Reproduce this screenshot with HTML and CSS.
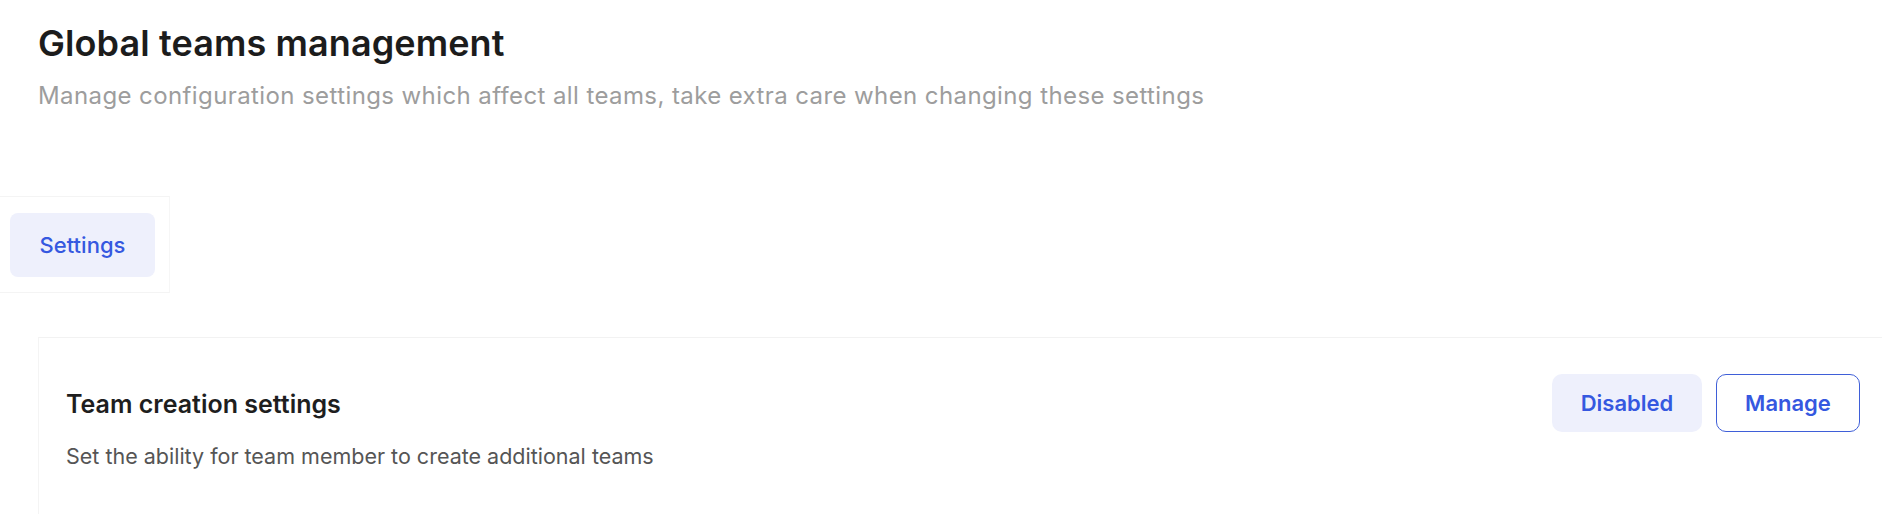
FILE: index.html
```html
<!DOCTYPE html>
<html lang="en">
<head>
  <meta charset="UTF-8" />
  <meta name="viewport" content="width=device-width, initial-scale=1.0"/>
  <title>Global teams management</title>
  <link rel="stylesheet" href="styles.css">
</head>
<body>

  <div class="page">
    <header class="page-header">
      <h1>Global teams management</h1>
      <p>Manage configuration settings which affect all teams, take extra care when changing these settings</p>
    </header>

    <nav class="tabs">
      <button type="button" class="tab active">Settings</button>
    </nav>

    <section class="card">
      <div class="setting-row">
        <div class="setting-info">
          <h3>Team creation settings</h3>
          <p>Set the ability for team member to create additional teams</p>
        </div>
        <div class="setting-actions">
          <button type="button" class="status">Disabled</button>
          <button type="button" class="manage">Manage</button>
        </div>
      </div>
    </section>
  </div>

</body>
</html>
```

FILE: styles.css
```css
* {
  margin: 0;
  padding: 0;
  box-sizing: border-box;
}

body, html {
  height: 100%;
  font-family: Inter, 'Noto Sans', sans-serif;
  background-color: white;
  overflow: hidden;
}

.page {
  display: flex;
  flex-direction: column;
}

.page-header {
  padding: 22px 0 0 38px;
}

.page-header h1 {
  font-size: 36px;
  font-weight: 600;
  line-height: 42px;
  letter-spacing: 0.1px;
  color: #1c1c1c;
}

.page-header p {
  margin-top: 17px;
  font-size: 24px;
  line-height: 30px;
  letter-spacing: 0.4px;
  color: #9d9d9d;
}

.tabs {
  margin-top: 85px;
  width: 170px;
  padding: 16px 15px 15px 10px;
  border-top: 1px solid #f4f4f4;
  border-bottom: 1px solid #f4f4f4;
  border-right: 1px solid #f6f6f6;
}

.tab {
  width: 145px;
  height: 64px;
  border: none;
  border-radius: 8px;
  background-color: #eef0fc;
  color: #3558e0;
  font-family: inherit;
  font-size: 22px;
  font-weight: 500;
  cursor: pointer;
}

.card {
  margin: 44px 0 0 38px;
  border-top: 1px solid #f2f2f2;
  border-left: 1px solid #f4f4f4;
  padding: 36px 22px 60px 27px;
  min-height: 200px;
}

.setting-row {
  display: flex;
  justify-content: space-between;
  align-items: flex-start;
}

.setting-info h3 {
  margin-top: 15px;
  font-size: 25px;
  font-weight: 600;
  color: #1e1e1e;
}

.setting-info p {
  margin-top: 24px;
  font-size: 21.5px;
  color: #555;
}

.setting-actions {
  display: flex;
  gap: 14px;
}

.setting-actions button {
  width: 150px;
  height: 58px;
  border-radius: 10px;
  font-family: inherit;
  font-size: 22px;
  font-weight: 600;
  color: #3558e0;
  cursor: pointer;
}

.status {
  background-color: #eef0fc;
  border: none;
}

.setting-actions .manage {
  width: 144px;
  background-color: white;
  border: 1.5px solid #3f5fd8;
}
```
